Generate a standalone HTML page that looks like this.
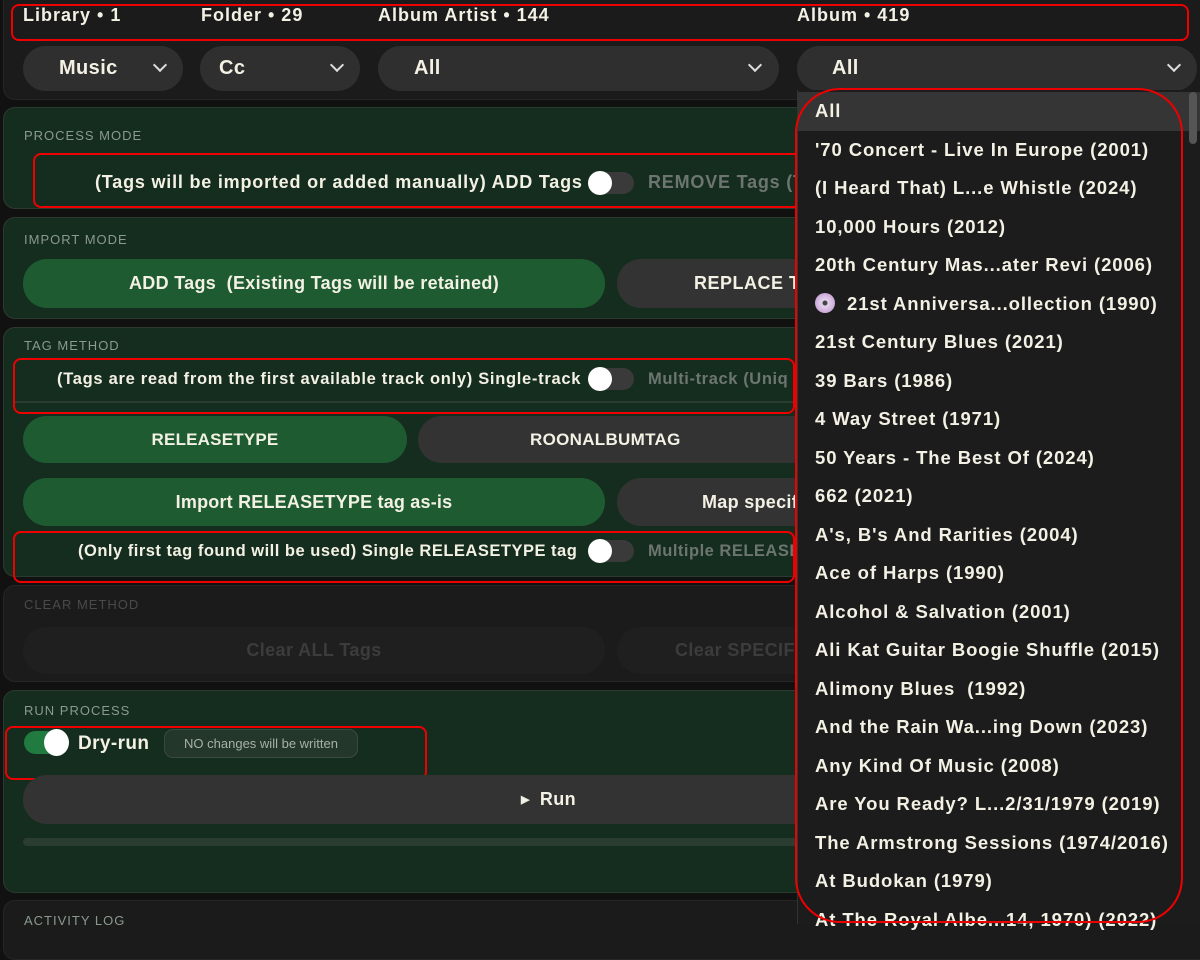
<!DOCTYPE html>
<html><head><meta charset="utf-8"><style>
*{box-sizing:border-box;margin:0;padding:0}
body{width:1200px;height:924px;overflow:hidden;background:#111;font-family:"Liberation Sans",sans-serif;font-weight:bold;color:#f3f0e4;position:relative;letter-spacing:0.4px}
.a{position:absolute}
.panel{position:absolute;left:3px;width:1230px;border-radius:12px;border:1px solid #2b3a2f;background:#152d1e}
.dark{background:#1b1b1b;border-color:#262626}
.lbl{position:absolute;left:20px;font-size:13px;font-weight:normal;letter-spacing:1px;color:#8a9a8e}
.btn{position:absolute;border-radius:24px;display:flex;align-items:center;justify-content:center;font-size:18px}
.g{background:#1e5b31}.k{background:#333}
.sel{position:absolute;top:46px;height:45px;border-radius:23px;background:#2f2f2f;font-size:20px;display:flex;align-items:center}
.chev{position:absolute;top:14px;width:10px;height:10px;border-right:2px solid #ddd;border-bottom:2px solid #ddd;transform:rotate(45deg)}
.tog{position:absolute;width:44px;height:22px;border-radius:11px;background:#3a3a3a}
.tog:before{content:"";position:absolute;left:-2px;top:-1px;width:24px;height:24px;border-radius:50%;background:#fff}
.red{position:absolute;border:2px solid #e00;border-radius:8px}
.dim{color:#6d7570}
.it{height:38.5px;line-height:38.5px;padding-left:17px;font-size:18.5px;white-space:nowrap;letter-spacing:0.9px}
</style></head><body>
<div class="a dark" style="left:3px;top:-10px;width:1230px;height:110px;background:#1b1b1b;border:1px solid #262626;border-radius:12px"></div>
<div class="a" style="left:23px;top:5px;font-size:18px;letter-spacing:1px">Library • 1</div>
<div class="a" style="left:201px;top:5px;font-size:18px;letter-spacing:1px">Folder • 29</div>
<div class="a" style="left:378px;top:5px;font-size:18px;letter-spacing:1px">Album Artist • 144</div>
<div class="a" style="left:797px;top:5px;font-size:18px;letter-spacing:1px">Album • 419</div>
<div class="red" style="left:11px;top:4px;width:1178px;height:37px"></div>
<div class="sel" style="left:23px;width:160px;padding-left:36px">Music<span class="chev" style="left:132px"></span></div>
<div class="sel" style="left:200px;width:160px;padding-left:19px">Cc<span class="chev" style="left:132px"></span></div>
<div class="sel" style="left:378px;width:401px;padding-left:36px">All<span class="chev" style="left:372px"></span></div>
<div class="sel" style="left:797px;width:400px;padding-left:35px">All<span class="chev" style="left:372px"></span></div>

<div class="panel" style="top:107px;height:102px"><div class="lbl" style="top:20px">PROCESS MODE</div></div>
<div class="a" style="left:95px;top:172px;font-size:18px;letter-spacing:0.8px">(Tags will be imported or added manually) ADD Tags</div>
<div class="tog" style="left:590px;top:172px"></div>
<div class="a dim" style="left:648px;top:172px;font-size:18px;letter-spacing:0.8px">REMOVE Tags (T</div>
<div class="red" style="left:33px;top:153px;width:780px;height:55px"></div>

<div class="panel" style="top:217px;height:102px"><div class="lbl" style="top:14px">IMPORT MODE</div></div>
<div class="btn g" style="left:23px;top:259px;width:582px;height:49px;letter-spacing:0.3px">ADD Tags &nbsp;(Existing Tags will be retained)</div>
<div class="btn k" style="left:617px;top:259px;width:400px;height:49px;justify-content:flex-start;padding-left:77px;letter-spacing:0.5px">REPLACE Tags</div>

<div class="panel" style="top:327px;height:250px"><div class="lbl" style="top:10px">TAG METHOD</div></div>
<div class="a" style="left:57px;top:370px;font-size:16.5px;letter-spacing:0.7px">(Tags are read from the first available track only) Single-track</div>
<div class="tog" style="left:590px;top:368px"></div>
<div class="a dim" style="left:648px;top:370px;font-size:16.5px;letter-spacing:0.6px">Multi-track (Uniq</div>
<div class="a" style="left:15px;top:401px;width:780px;height:2px;background:#2b3d31"></div>
<div class="red" style="left:13px;top:358px;width:782px;height:56px"></div>
<div class="btn g" style="left:23px;top:416px;width:384px;height:47px;font-size:17px;letter-spacing:0.2px">RELEASETYPE</div>
<div class="btn k" style="left:418px;top:416px;width:400px;height:47px;font-size:17px;justify-content:flex-start;padding-left:112px;letter-spacing:0.3px">ROONALBUMTAG</div>
<div class="btn g" style="left:23px;top:478px;width:582px;height:48px;letter-spacing:0.2px">Import RELEASETYPE tag as-is</div>
<div class="btn k" style="left:617px;top:478px;width:400px;height:48px;justify-content:flex-start;padding-left:85px;letter-spacing:0.3px">Map specific</div>
<div class="a" style="left:78px;top:542px;font-size:16.5px;letter-spacing:0.5px">(Only first tag found will be used) Single RELEASETYPE tag</div>
<div class="tog" style="left:590px;top:540px"></div>
<div class="a dim" style="left:648px;top:542px;font-size:16.5px;letter-spacing:0.5px">Multiple RELEASE</div>
<div class="red" style="left:13px;top:531px;width:782px;height:52px"></div>

<div class="panel dark" style="top:585px;height:97px"><div class="lbl" style="top:11px;color:#4a4a4a">CLEAR METHOD</div></div>
<div class="btn" style="left:23px;top:627px;width:582px;height:47px;background:#1f1f1f;color:#3c3c3c">Clear ALL Tags</div>
<div class="btn" style="left:617px;top:627px;width:400px;height:47px;background:#1f1f1f;color:#3c3c3c;justify-content:flex-start;padding-left:58px">Clear SPECIFIC</div>

<div class="panel" style="top:690px;height:203px"><div class="lbl" style="top:12px">RUN PROCESS</div></div>
<div class="a" style="left:24px;top:731px;width:44px;height:23px;border-radius:12px;background:#217a40"></div>
<div class="a" style="left:44px;top:729px;width:25px;height:27px;border-radius:50%;background:#fff"></div>
<div class="a" style="left:78px;top:733px;font-size:19px">Dry-run</div>
<div class="a" style="left:164px;top:729px;width:194px;height:29px;border-radius:9px;border:1px solid #3a4a3e;background:#23382a;color:#a8b0aa;font-weight:normal;font-size:13px;line-height:27px;text-align:center;letter-spacing:0">NO changes will be written</div>
<div class="red" style="left:5px;top:726px;width:422px;height:54px"></div>
<div class="btn k" style="left:23px;top:775px;width:1000px;height:49px;justify-content:flex-start;padding-left:498px;font-size:18px"><span style="font-size:11px;margin-right:10px">▶</span>Run</div>
<div class="a" style="left:23px;top:838px;width:800px;height:8px;border-radius:4px;background:#2b3d31"></div>
<div class="panel dark" style="top:900px;height:60px"><div class="lbl" style="top:12px">ACTIVITY LOG</div></div>

<div class="a" style="left:797px;top:90px;width:403px;height:834px;background:#1c1c1c;border-left:1px solid #333">
<div style="position:absolute;right:3px;top:2px;width:8px;height:52px;border-radius:4px;background:#555"></div>
<div style="padding-top:2px">
<div class="it" style="background:#353535">All</div>
<div class="it">'70 Concert - Live In Europe (2001)</div>
<div class="it">(I Heard That) L...e Whistle (2024)</div>
<div class="it">10,000 Hours (2012)</div>
<div class="it">20th Century Mas...ater Revi (2006)</div>
<div class="it"><span style="display:inline-block;width:20px;height:20px;border-radius:50%;background:radial-gradient(circle,#444 0 2px,#e6d4ee 3px,#c9a8d8 10px);vertical-align:-3px;margin-right:12px"></span>21st Anniversa...ollection (1990)</div>
<div class="it">21st Century Blues (2021)</div>
<div class="it">39 Bars (1986)</div>
<div class="it">4 Way Street (1971)</div>
<div class="it">50 Years - The Best Of (2024)</div>
<div class="it">662 (2021)</div>
<div class="it">A's, B's And Rarities (2004)</div>
<div class="it">Ace of Harps (1990)</div>
<div class="it">Alcohol &amp; Salvation (2001)</div>
<div class="it">Ali Kat Guitar Boogie Shuffle (2015)</div>
<div class="it">Alimony Blues &nbsp;(1992)</div>
<div class="it">And the Rain Wa...ing Down (2023)</div>
<div class="it">Any Kind Of Music (2008)</div>
<div class="it">Are You Ready? L...2/31/1979 (2019)</div>
<div class="it">The Armstrong Sessions (1974/2016)</div>
<div class="it">At Budokan (1979)</div>
<div class="it">At The Royal Albe...14, 1970) (2022)</div>
</div></div>
<div class="red" style="left:795px;top:88px;width:388px;height:835px;border-radius:45px"></div>
</body></html>
